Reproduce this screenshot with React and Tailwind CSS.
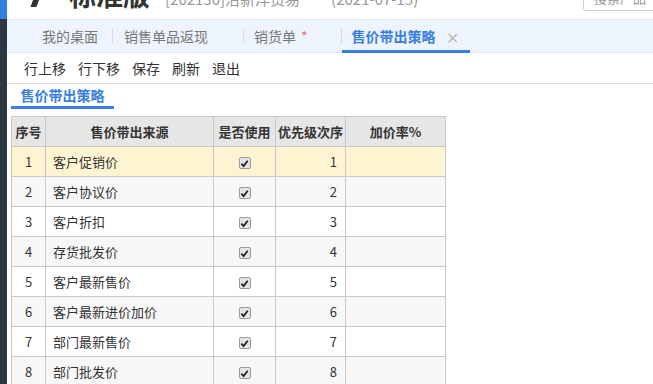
import React from 'react';

const rows = [
  { id: 1, name: '客户促销价' },
  { id: 2, name: '客户协议价' },
  { id: 3, name: '客户折扣' },
  { id: 4, name: '存货批发价' },
  { id: 5, name: '客户最新售价' },
  { id: 6, name: '客户最新进价加价' },
  { id: 7, name: '部门最新售价' },
  { id: 8, name: '部门批发价' },
];

const tabs = [
  { label: '我的桌面' },
  { label: '销售单品返现' },
  { label: '销货单', star: true },
];

const Check = () => (
  <span className="inline-flex items-center justify-center w-[12px] h-[12px] rounded-[2px] border border-[#9a9a9a] bg-[#e4e4e4]">
    <svg width="9" height="9" viewBox="0 0 10 10">
      <path d="M1.5 5.2 L4 7.8 L8.6 2" fill="none" stroke="#222" strokeWidth="2" />
    </svg>
  </span>
);

const App = () => {
  return (
    <div
      className="w-[653px] h-[384px] overflow-hidden flex bg-white text-[#333]"
      style={{ fontFamily: '"Noto Sans CJK SC", "Noto Sans", sans-serif' }}
    >
      {/* barra lateral */}
      <div className="w-[7px] flex flex-col shrink-0">
        <div className="h-[19px] bg-[#2f7fe3]" />
        <div className="flex-1 bg-[#2c3744]" />
      </div>

      <div className="flex-1 flex flex-col min-w-0">
        {/* cabecera recortada */}
        <div className="h-[20px] shrink-0 overflow-hidden border-b border-[#e2e6ec] relative">
          <div className="flex items-start h-[20px]">
            <span className="ml-[26px] -mt-[7px] w-[6px] h-[14px] bg-[#333] skew-x-[-20deg]" />
            <span className="ml-[30px] -mt-[19px] text-[27px] font-bold leading-[27px] text-[#333]">标准版</span>
            <span className="ml-[15px] -mt-[9px] text-[15px] leading-[15px] text-[#999]">[202130]沿新洋贸易</span>
            <span className="ml-[31px] -mt-[9px] text-[15px] leading-[15px] text-[#999]">(2021-07-15)</span>
          </div>
          <div className="absolute left-[576px] top-[-12px] w-[100px] h-[23px] border border-[#cfcfcf] rounded-[3px] bg-white pl-[10px] text-[13px] leading-[18px] text-[#999]">
            搜索产品
          </div>
        </div>

        {/* pestañas */}
        <div className="h-[33px] shrink-0 bg-[#eef4fd] border-b border-[#dde5f0] flex items-stretch text-[14px]">
          <div className="flex items-center pl-[35px]">
            {tabs.map((t, i) => (
              <React.Fragment key={t.label}>
                <span className="text-[#777]">
                  {t.label}
                  {t.star && <span className="ml-[5px] text-[#f06a6a]">*</span>}
                </span>
                <span
                  className={`w-px h-[16px] bg-[#dcdcdc] ${
                    i === 0 ? 'ml-[14px] mr-[11px]' : i === 1 ? 'ml-[35px] mr-[10px]' : 'ml-[33px]'
                  }`}
                />
              </React.Fragment>
            ))}
          </div>
          <div className="flex items-center pl-[10px] pr-[11px] border-b-[3px] border-[#3a7fe0] pt-[3px] -mb-px">
            <span className="text-[#3a7fe0] font-bold">售价带出策略</span>
            <span className="ml-[10px] text-[#bbb] text-[16px] leading-none">✕</span>
          </div>
        </div>

        {/* barra de herramientas */}
        <div className="h-[31px] shrink-0 border-b border-[#dedede] flex items-center pl-[17px] gap-[12px] text-[14px] text-[#333]">
          <span>行上移</span>
          <span>行下移</span>
          <span>保存</span>
          <span>刷新</span>
          <span>退出</span>
        </div>

        {/* sub pestaña */}
        <div className="h-[25px] shrink-0 pl-[4px] flex">
          <div className="w-[103px] border-b-[3px] border-[#3a7fe0] flex items-center justify-center text-[14px] font-bold text-[#3a7fe0]">
            售价带出策略
          </div>
        </div>

        {/* tabla */}
        <div className="pl-[4px] pt-[7px]">
          <table className="border-collapse text-[13px] text-[#333]">
            <thead>
              <tr className="h-[30px] bg-[#e6e6e6] font-bold">
                <th className="w-[34px] border border-[#c8c8c8] font-bold">序号</th>
                <th className="w-[168px] border border-[#c8c8c8] font-bold">售价带出来源</th>
                <th className="w-[62px] border border-[#c8c8c8] font-bold">是否使用</th>
                <th className="w-[70px] border border-[#c8c8c8] font-bold">优先级次序</th>
                <th className="w-[100px] border border-[#c8c8c8] font-bold">加价率%</th>
              </tr>
            </thead>
            <tbody>
              {rows.map((r) => (
                <tr
                  key={r.id}
                  className={`h-[30px] ${
                    r.id === 1 ? 'bg-[#fdf5d2]' : r.id % 2 === 0 ? 'bg-[#f7f7f7]' : 'bg-white'
                  }`}
                >
                  <td className="border border-[#c8c8c8] text-center">{r.id}</td>
                  <td className="border border-[#c8c8c8] pl-[7px]">{r.name}</td>
                  <td className="border border-[#c8c8c8] text-center">
                    <span className="inline-flex align-middle"><Check /></span>
                  </td>
                  <td className="border border-[#c8c8c8] text-right pr-[8px]">{r.id}</td>
                  <td className="border border-[#c8c8c8]" />
                </tr>
              ))}
            </tbody>
          </table>
        </div>
      </div>
    </div>
  );
};

export default App;
